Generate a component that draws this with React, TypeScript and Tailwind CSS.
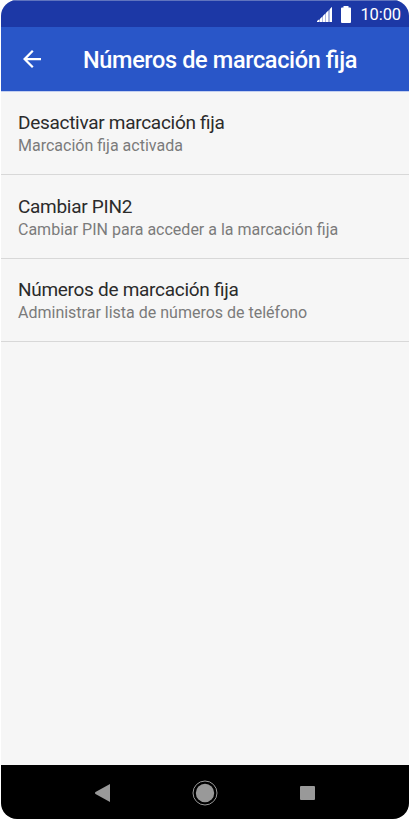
const items = [
  { title: 'Desactivar marcación fija', summary: 'Marcación fija activada' },
  { title: 'Cambiar PIN2', summary: 'Cambiar PIN para acceder a la marcación fija' },
  { title: 'Números de marcación fija', summary: 'Administrar lista de números de teléfono' },
];

function StatusBar() {
  return (
    <div className="flex h-[27px] shrink-0 items-center justify-end border-t border-[#6074be] bg-[#1c38a6] pr-[8px] text-white">
      <svg className="mr-[9px] h-[15px] w-[15px]" viewBox="0 0 15 15" fill="currentColor">
        <path d="M0 15L15 0v15z" opacity="0.65" />
        <path d="M0 15v-1l2-1.5V15zM3 15v-3l2-2v5zM6 15V9l2-2v8zM9 15V6l2-2v11zM13 15V2l2-2v15z" />
      </svg>
      <svg className="mr-[9px] h-[17px] w-[10px]" viewBox="0 0 10 17" fill="currentColor">
        <path d="M2.5 0h5v1.5h1.5q1 0 1 1V16q0 1-1 1H1q-1 0-1-1V2.5q0-1 1-1h1.5z" />
      </svg>
      <span className="pt-[2px] text-[16.5px] leading-none tracking-[-0.1px]">10:00</span>
    </div>
  );
}

function NavigationBar() {
  return (
    <nav className="flex h-[54px] shrink-0 items-center bg-black pt-[1px] text-[#999]">
      <svg className="ml-[94px] h-[18px] w-[15px]" viewBox="0 0 15 18" fill="currentColor">
        <path d="M15 0v18L.5 10Q-.5 9 .5 8z" />
      </svg>
      <svg className="ml-[82px] h-[26px] w-[26px]" viewBox="0 0 26 26">
        <circle cx="13" cy="13" r="12" fill="none" stroke="currentColor" strokeWidth="1" />
        <circle cx="13" cy="13" r="9.2" fill="currentColor" />
      </svg>
      <div className="ml-[82px] h-[14px] w-[15px] rounded-[1px] bg-[#999]" />
    </nav>
  );
}

export default function App() {
  return (
    <div className="h-[820px] w-[410px] bg-white px-[1px] pb-[1px] font-['Roboto',sans-serif] [font-feature-settings:'liga'_1]">
      <div className="flex h-full flex-col overflow-hidden rounded-[16px] bg-[#f6f6f6]">
        <StatusBar />
        <header className="flex h-[64px] shrink-0 items-center bg-[#2956c8] text-white">
          <svg className="ml-[22px] h-[18px] w-[18px]" viewBox="4 4 16 16" fill="currentColor">
            <path d="M20 11H7.83l5.59-5.59L12 4l-8 8 8 8 1.41-1.41L7.83 13H20v-2z" />
          </svg>
          <h1 className="ml-[42px] pt-[4px] text-[23.5px] font-medium leading-none tracking-[-0.36px]">
            Números de marcación fija
          </h1>
        </header>
        <main className="flex-1 border-t border-[#c3cff0]">
          {items.map((item) => (
            <div key={item.title} className="h-[83.4px] border-b border-[#d8d8d8] pt-[19.4px] pl-[17px]">
              <div className="text-[19px] leading-[23px] tracking-[-0.29px] text-[#2b2b2b]">{item.title}</div>
              <div className="text-[16px] leading-[23px] text-[#7b7b7b]">{item.summary}</div>
            </div>
          ))}
        </main>
        <NavigationBar />
      </div>
    </div>
  );
}
